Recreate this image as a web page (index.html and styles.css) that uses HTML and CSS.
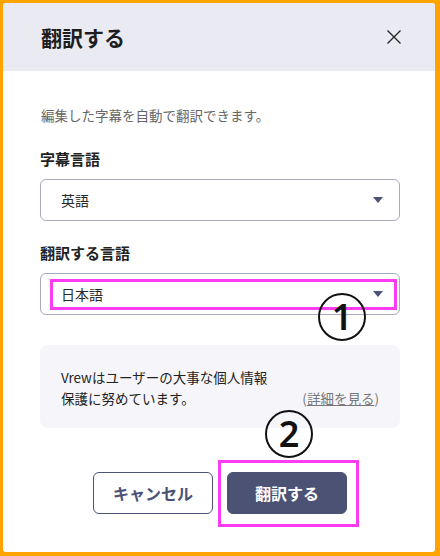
FILE: index.html
```html
<!DOCTYPE html>
<html lang="ja">
<head>
<meta charset="utf-8">
<title>翻訳する</title>
<link rel="stylesheet" href="styles.css">
</head>
<body>
<div class="dialog">
  <div class="header">
    <h1 class="title">翻訳する</h1>
    <button class="close" aria-label="閉じる">
      <svg width="14" height="14" viewBox="0 0 14 14"><path d="M0.5 0.5 L13.5 13.5 M13.5 0.5 L0.5 13.5" stroke="#222" stroke-width="1.3" fill="none"/></svg>
    </button>
  </div>
  <div class="body">
    <p class="desc">編集した字幕を自動で翻訳できます。</p>
    <div class="label first">字幕言語</div>
    <div class="select">
      <span class="value">英語</span>
      <svg class="caret" width="10" height="6" viewBox="0 0 10 6"><path d="M0 0 H10 L5 6 Z" fill="#4b5274"/></svg>
    </div>
    <div class="label">翻訳する言語</div>
    <div class="select target">
      <span class="value">日本語</span>
      <svg class="caret" width="10" height="6" viewBox="0 0 10 6"><path d="M0 0 H10 L5 6 Z" fill="#4b5274"/></svg>
      <div class="highlight hl-select"></div>
    </div>
    <div class="info">
      <div class="info-line">Vrewはユーザーの大事な個人情報</div>
      <div class="info-line split">
        <span>保護に努めています。</span>
        <span class="more">(<a href="#">詳細を見る</a>)</span>
      </div>
    </div>
    <div class="actions">
      <button class="btn cancel">キャンセル</button>
      <button class="btn primary">翻訳する<span class="highlight hl-button"></span></button>
    </div>
  </div>
  <div class="mark mark-1">1</div>
  <div class="mark mark-2">2</div>
</div>
</body>
</html>
```

FILE: styles.css
```css
* { box-sizing: border-box; }
html, body { margin: 0; padding: 0; }
body {
  width: 440px;
  height: 556px;
  background: #ffa300;
  padding: 3px 5px 4px 3px;
  font-family: "Noto Sans CJK JP", "Noto Sans", sans-serif;
  color: #222;
}
.dialog {
  position: relative;
  width: 432px;
  height: 549px;
  background: #fff;
  border-radius: 3px;
  overflow: hidden;
}
.header {
  height: 68px;
  background: #e9eaf2;
  display: flex;
  align-items: center;
  justify-content: space-between;
  padding: 0 34px 0 38px;
}
.title {
  margin: 0;
  font-size: 21px;
  font-weight: 700;
  line-height: 28px;
  color: #1d1d1d;
}
.close {
  border: 0;
  background: none;
  padding: 0;
  width: 14px;
  height: 14px;
  display: flex;
}
.body {
  padding: 34px 35px 0 37px;
}
.desc {
  margin: 0 0 0 1px;
  font-size: 13.5px;
  line-height: 20px;
  color: #666;
}
.label {
  margin-top: 21px;
  font-size: 15px;
  font-weight: 700;
  line-height: 22px;
  color: #222;
}
.label.first { margin-top: 23px; }
.select {
  position: relative;
  margin-top: 9px;
  height: 42px;
  border: 1px solid #a9abbe;
  border-radius: 6px;
  display: flex;
  align-items: center;
  justify-content: space-between;
  padding: 0 16px 0 20px;
}
.select .value {
  font-size: 14px;
  color: #2a2a2a;
}
.caret { display: block; }
.highlight {
  position: absolute;
  border: 3px solid #fc3cf4;
  pointer-events: none;
}
.hl-select {
  left: 9px;
  top: 5px;
  width: 347px;
  height: 31px;
}
.info {
  margin-top: 30px;
  background: #f6f6fa;
  border-radius: 8px;
  padding: 22px 21px 19px 21px;
  font-size: 13.5px;
  line-height: 21px;
  color: #222;
}
.split {
  display: flex;
  justify-content: space-between;
}
.more { color: #777; }
.more a { color: #777; text-decoration: underline; }
.actions {
  margin-top: 44px;
  display: flex;
  justify-content: center;
  gap: 14px;
}
.btn {
  position: relative;
  width: 120px;
  height: 42px;
  border-radius: 6px;
  font-family: inherit;
  font-size: 16px;
  font-weight: 700;
  padding: 0;
}
.cancel {
  background: #fff;
  border: 1px solid #4b5274;
  color: #4b5274;
}
.primary {
  background: #4b5274;
  border: 1px solid #4b5274;
  color: #fff;
}
.hl-button {
  left: -10px;
  top: -13px;
  right: -13px;
  bottom: -14px;
}
.mark {
  position: absolute;
  width: 48px;
  height: 48px;
  border: 2.5px solid #111;
  border-radius: 50%;
  display: flex;
  align-items: center;
  justify-content: center;
  font-family: "Noto Sans", "DejaVu Sans", sans-serif;
  font-size: 36px;
  font-weight: 600;
  line-height: 1;
  color: #111;
}
.mark-1 { left: 315px; top: 290px; }
.mark-2 { left: 262px; top: 407px; }
```
